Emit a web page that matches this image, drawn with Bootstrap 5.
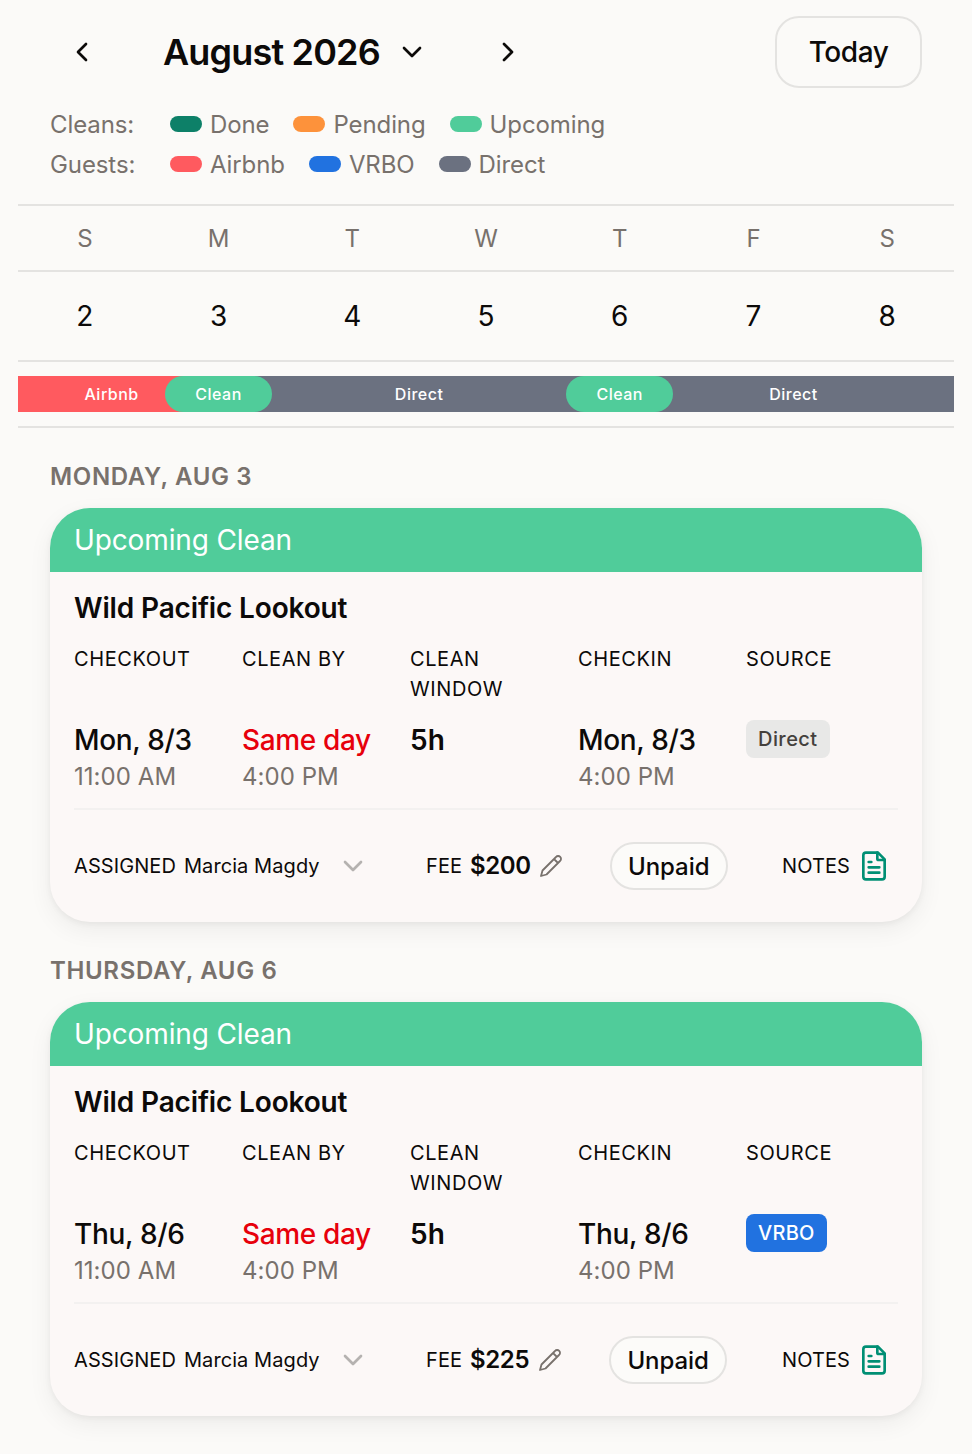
<!DOCTYPE html>
<html lang="en">
<head>
<meta charset="utf-8">
<meta name="viewport" content="width=device-width, initial-scale=1">
<title>Cleaning calendar</title>
<link href="https://cdn.jsdelivr.net/npm/bootstrap@5.3.0/dist/css/bootstrap.min.css" rel="stylesheet">
<style>
:root{--ink:#0c0a09;--muted:#78716c;--line:#e4e3e1;--up:#50cc9a}
body{font-family:Inter,"Liberation Sans",sans-serif;background:#fbfaf8;color:var(--ink);font-size:24px;line-height:32px;letter-spacing:-.1px;padding-bottom:38px}
svg{display:block;flex:none;fill:none;stroke:currentColor;stroke-width:2;stroke-linecap:round;stroke-linejoin:round}
.topbar{padding:16px 50px 0;height:88px}
.icon-btn{width:64px;height:64px}
.month{width:362px;padding-left:49px;gap:16px;font-size:36px;font-weight:600;letter-spacing:-.83px}
.today{width:147px;height:72px;border:2px solid var(--line);border-radius:24px;font-size:28px;font-weight:500;letter-spacing:-.45px;background:none;color:var(--ink);padding:0}
.legend{padding:21px 50px 23px;gap:8px;color:var(--muted)}
.legend-name{width:120px}
.key{gap:8px;margin-right:24px}
.swatch{width:32px;height:16px;border-radius:8px;margin-top:-2px}
.c-done{background:#0d8068}.c-pending{background:#fd923b}.c-up{background:var(--up)}
.c-airbnb{background:#ff5a5f}.c-vrbo{background:#2172e0}.c-direct{background:#6b7180}
.week{margin:0 18px;border-bottom:2px solid var(--line)}
.week>div{border-top:2px solid var(--line)}
.days{height:66px;color:var(--muted);padding-top:2px}
.dates{height:90px;font-size:28px}
.lane{display:grid;grid-template-columns:repeat(70,1fr);padding:14px 0;grid-template-rows:36px}
.lane>div{grid-row:1;display:flex;align-items:center;justify-content:center;color:#fff;font-size:16px;font-weight:500;letter-spacing:.5px;min-width:0}
.lane>.pill{border-radius:18px;z-index:1}
.day-head{padding:33px 50px 0;height:80px;font-size:24px;line-height:32px;font-weight:600;letter-spacing:.65px;color:var(--muted)}
.job{margin:0 50px;height:414px;border-radius:40px;background:#fcf8f7;overflow:hidden;box-shadow:0 8px 24px rgba(0,0,0,.06),0 2px 6px rgba(0,0,0,.05)}
.job-bar{height:64px;padding:0 24px;background:var(--up);color:#fff;font-size:28px;letter-spacing:-.13px}
.place{padding-top:16px;font-size:28px;line-height:40px;font-weight:600;letter-spacing:-.15px}
.facts{display:grid;grid-template-columns:repeat(5,152px);column-gap:16px;padding-top:16px}
.lbl{font-size:20px;line-height:30px;letter-spacing:.58px;height:60px}
.val{padding-top:16px;height:104px}
.big{font-size:28px;line-height:41px;font-weight:500;letter-spacing:-.35px}
.late{color:#e7000b}
.hours{font-weight:600;letter-spacing:.2px}
.sub{line-height:32px;color:var(--muted);letter-spacing:.05px}
.tag{height:38px;border-radius:8px;padding:0 12px;font-size:20px;font-weight:500;letter-spacing:.45px}
.t-vrbo{letter-spacing:.25px}
.t-direct{background:#e8e8e7;color:#44403c}
.foot{border-top:2px solid #f3f1f0;height:114px;font-size:20px;letter-spacing:.08px}
.assignee{width:352px;gap:8px}
.assignee svg{margin-left:9px;color:#b5b2b0}
.fee{gap:8px;margin-right:47px}
.fee b{font-size:24px;font-weight:600;letter-spacing:-.4px;min-width:60px}
.fee svg{color:var(--muted);stroke-width:1.8}
.status{height:48px;width:118px;padding-top:1px;border:2px solid var(--line);border-radius:24px;background:#fcfbf9;font-size:24px;font-weight:500;letter-spacing:-.08px}
.notes{margin-left:auto;gap:8px;padding-right:8px}
.notes svg{color:#008f74}
</style>
</head>
<body>
<svg width="0" height="0" class="position-absolute" aria-hidden="true">
<symbol id="down" viewBox="0 0 24 24"><path d="m6 9 6 6 6-6"/></symbol>
<symbol id="pencil" viewBox="0 0 24 24"><path d="M17 3a2.85 2.83 0 1 1 4 4L7.5 20.5 2 22l1.5-5.5ZM15 5l4 4"/></symbol>
<symbol id="doc" viewBox="0 0 24 24"><path d="M15 2H6a2 2 0 0 0-2 2v16a2 2 0 0 0 2 2h12a2 2 0 0 0 2-2V7Z"/><path d="M14.5 2v4.5a1 1 0 0 0 1 1H20M10 9H8M16 13H8M16 17H8"/></symbol>
</svg>
<header class="topbar d-flex align-items-center justify-content-between">
  <div class="d-flex align-items-center">
    <div class="icon-btn d-flex align-items-center justify-content-center"><svg width="32" height="32" viewBox="0 0 24 24"><path d="m15 18-6-6 6-6"/></svg></div>
    <div class="month d-flex align-items-center"><span>August 2026</span><svg width="32" height="32"><use href="#down"/></svg></div>
    <div class="icon-btn d-flex align-items-center justify-content-center"><svg width="32" height="32" viewBox="0 0 24 24"><path d="m9 18 6-6-6-6"/></svg></div>
  </div>
  <button class="today">Today</button>
</header>
<section class="legend d-flex flex-column">
  <div class="d-flex"><span class="legend-name">Cleans:</span>
    <span class="key d-flex align-items-center"><i class="swatch c-done"></i>Done</span>
    <span class="key d-flex align-items-center"><i class="swatch c-pending"></i>Pending</span>
    <span class="key d-flex align-items-center"><i class="swatch c-up"></i>Upcoming</span></div>
  <div class="d-flex"><span class="legend-name">Guests:</span>
    <span class="key d-flex align-items-center"><i class="swatch c-airbnb"></i>Airbnb</span>
    <span class="key d-flex align-items-center"><i class="swatch c-vrbo"></i>VRBO</span>
    <span class="key d-flex align-items-center"><i class="swatch c-direct"></i>Direct</span></div>
</section>
<section class="week">
  <div class="days row g-0 align-items-center text-center"><span class="col">S</span><span class="col">M</span><span class="col">T</span><span class="col">W</span><span class="col">T</span><span class="col">F</span><span class="col">S</span></div>
  <div class="dates row g-0 align-items-center text-center"><span class="col">2</span><span class="col">3</span><span class="col">4</span><span class="col">5</span><span class="col">6</span><span class="col">7</span><span class="col">8</span></div>
  <div class="lane">
    <div class="c-airbnb" style="grid-column:1/15">Airbnb</div>
    <div class="c-direct" style="grid-column:17/45">Direct</div>
    <div class="c-direct" style="grid-column:47/71">Direct</div>
    <div class="pill c-up" style="grid-column:12/20">Clean</div>
    <div class="pill c-up" style="grid-column:42/50">Clean</div>
  </div>
</section>
<h2 class="day-head m-0">MONDAY, AUG 3</h2>
<article class="job">
  <div class="job-bar d-flex align-items-center">Upcoming Clean</div>
  <div class="px-4">
    <div class="place">Wild Pacific Lookout</div>
    <div class="facts">
      <div><div class="lbl">CHECKOUT</div><div class="val"><div class="big">Mon, 8/3</div><div class="sub">11:00 AM</div></div></div>
      <div><div class="lbl">CLEAN BY</div><div class="val"><div class="big late">Same day</div><div class="sub">4:00 PM</div></div></div>
      <div><div class="lbl">CLEAN WINDOW</div><div class="val"><div class="big hours">5h</div></div></div>
      <div><div class="lbl">CHECKIN</div><div class="val"><div class="big">Mon, 8/3</div><div class="sub">4:00 PM</div></div></div>
      <div><div class="lbl">SOURCE</div><div class="val"><span class="tag t-direct d-inline-flex align-items-center">Direct</span></div></div>
    </div>
    <div class="foot d-flex align-items-center">
      <div class="assignee d-flex align-items-center"><span>ASSIGNED</span><span>Marcia Magdy</span><svg width="32" height="32"><use href="#down"/></svg></div>
      <div class="fee d-flex align-items-center"><span>FEE</span><b>$200</b><svg width="24" height="24"><use href="#pencil"/></svg></div>
      <div class="status d-flex align-items-center justify-content-center">Unpaid</div>
      <div class="notes d-flex align-items-center"><span>NOTES</span><svg width="32" height="32"><use href="#doc"/></svg></div>
    </div>
  </div>
</article>
<h2 class="day-head m-0">THURSDAY, AUG 6</h2>
<article class="job">
  <div class="job-bar d-flex align-items-center">Upcoming Clean</div>
  <div class="px-4">
    <div class="place">Wild Pacific Lookout</div>
    <div class="facts">
      <div><div class="lbl">CHECKOUT</div><div class="val"><div class="big">Thu, 8/6</div><div class="sub">11:00 AM</div></div></div>
      <div><div class="lbl">CLEAN BY</div><div class="val"><div class="big late">Same day</div><div class="sub">4:00 PM</div></div></div>
      <div><div class="lbl">CLEAN WINDOW</div><div class="val"><div class="big hours">5h</div></div></div>
      <div><div class="lbl">CHECKIN</div><div class="val"><div class="big">Thu, 8/6</div><div class="sub">4:00 PM</div></div></div>
      <div><div class="lbl">SOURCE</div><div class="val"><span class="tag t-vrbo c-vrbo text-white d-inline-flex align-items-center">VRBO</span></div></div>
    </div>
    <div class="foot d-flex align-items-center">
      <div class="assignee d-flex align-items-center"><span>ASSIGNED</span><span>Marcia Magdy</span><svg width="32" height="32"><use href="#down"/></svg></div>
      <div class="fee d-flex align-items-center"><span>FEE</span><b>$225</b><svg width="24" height="24"><use href="#pencil"/></svg></div>
      <div class="status d-flex align-items-center justify-content-center">Unpaid</div>
      <div class="notes d-flex align-items-center"><span>NOTES</span><svg width="32" height="32"><use href="#doc"/></svg></div>
    </div>
  </div>
</article>
<script src="https://cdn.jsdelivr.net/npm/bootstrap@5.3.0/dist/js/bootstrap.bundle.min.js"></script>
</body>
</html>
